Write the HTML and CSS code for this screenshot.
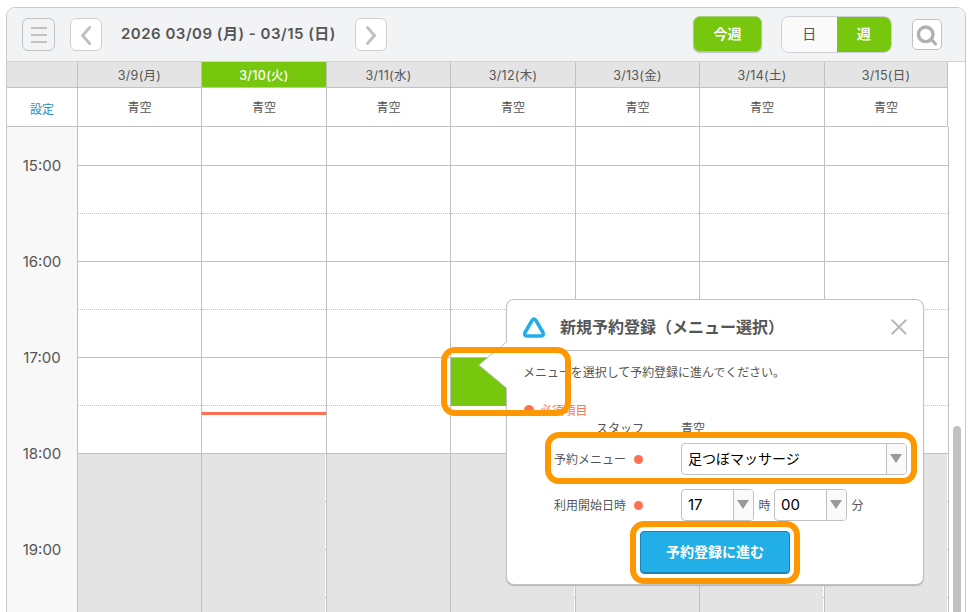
FILE: index.html
```html
<!DOCTYPE html>
<html lang="ja">
<head>
    <meta charset="UTF-8">
    <meta name="viewport" content="width=device-width, initial-scale=1.0">
    <title>予約カレンダー</title>
    <link rel="stylesheet" href="styles.css">
</head>
<body>
    <div class="calendar">
        <div class="toolbar">
            <button class="icon-button menu-button">
                <svg width="31" height="31" viewBox="0 0 31 31"><path d="M8 9h16M8 16h16M8 23h16" stroke="#c1c1c1" stroke-width="2"/></svg>
            </button>
            <button class="icon-button prev-button">
                <svg width="30" height="31" viewBox="0 0 30 31"><path d="M18.6 8.5l-7 8 7 8" fill="none" stroke="#c1c1c1" stroke-width="3" stroke-linecap="round"/></svg>
            </button>
            <h1 class="period">2026 03/09 (月) - 03/15 (日)</h1>
            <button class="icon-button next-button">
                <svg width="30" height="31" viewBox="0 0 30 31"><path d="M11.5 8.5l7 8-7 8" fill="none" stroke="#c1c1c1" stroke-width="3" stroke-linecap="round"/></svg>
            </button>
            <button class="this-week">今週</button>
            <div class="view-switch">
                <button class="view">日</button>
                <button class="view active">週</button>
            </div>
            <button class="icon-button search-button">
                <svg width="28" height="29" viewBox="0 0 28 29"><circle cx="12.7" cy="14.3" r="7.3" fill="none" stroke="#abb1b5" stroke-width="3.4"/><path d="M18.3 19.5l4.2 4.3" stroke="#abb1b5" stroke-width="3.2" stroke-linecap="round"/></svg>
            </button>
        </div>

        <div class="row days">
            <div class="cell"></div>
            <div class="cell">3/9(月)</div>
            <div class="cell today">3/10(火)</div>
            <div class="cell">3/11(水)</div>
            <div class="cell">3/12(木)</div>
            <div class="cell">3/13(金)</div>
            <div class="cell">3/14(土)</div>
            <div class="cell">3/15(日)</div>
        </div>
        <div class="row staff">
            <div class="cell"><a class="setting">設定</a></div>
            <div class="cell">青空</div>
            <div class="cell">青空</div>
            <div class="cell">青空</div>
            <div class="cell">青空</div>
            <div class="cell">青空</div>
            <div class="cell">青空</div>
            <div class="cell">青空</div>
        </div>
        <div class="row schedule">
            <div class="times">
                <div class="time">15:00</div>
                <div class="time">16:00</div>
                <div class="time">17:00</div>
                <div class="time">18:00</div>
                <div class="time">19:00</div>
            </div>
            <div class="day">
                <div class="slot first"></div><div class="slot half"></div><div class="slot"></div><div class="slot half"></div><div class="slot"></div><div class="slot half"></div><div class="slot"></div><div class="slot half"></div><div class="slot"></div><div class="slot half"></div>
                <div class="closed"></div>
            </div>
            <div class="day wide">
                <div class="slot first"></div><div class="slot half"></div><div class="slot"></div><div class="slot half"></div><div class="slot"></div><div class="slot half"></div><div class="slot"></div><div class="slot half"></div><div class="slot"></div><div class="slot half"></div>
                <div class="closed"></div>
                <div class="now"></div>
            </div>
            <div class="day">
                <div class="slot first"></div><div class="slot half"></div><div class="slot"></div><div class="slot half"></div><div class="slot"></div><div class="slot half"></div><div class="slot"></div><div class="slot half"></div><div class="slot"></div><div class="slot half"></div>
                <div class="closed"></div>
            </div>
            <div class="day wide">
                <div class="slot first"></div><div class="slot half"></div><div class="slot"></div><div class="slot half"></div><div class="slot"></div><div class="slot half selected"></div><div class="slot"></div><div class="slot half"></div><div class="slot"></div><div class="slot half"></div>
                <div class="closed"></div>
            </div>
            <div class="day">
                <div class="slot first"></div><div class="slot half"></div><div class="slot"></div><div class="slot half"></div><div class="slot"></div><div class="slot half"></div><div class="slot"></div><div class="slot half"></div><div class="slot"></div><div class="slot half"></div>
                <div class="closed"></div>
            </div>
            <div class="day wide">
                <div class="slot first"></div><div class="slot half"></div><div class="slot"></div><div class="slot half"></div><div class="slot"></div><div class="slot half"></div><div class="slot"></div><div class="slot half"></div><div class="slot"></div><div class="slot half"></div>
                <div class="closed"></div>
            </div>
            <div class="day wide">
                <div class="slot first"></div><div class="slot half"></div><div class="slot"></div><div class="slot half"></div><div class="slot"></div><div class="slot half"></div><div class="slot"></div><div class="slot half"></div><div class="slot"></div><div class="slot half"></div>
                <div class="closed"></div>
            </div>
            <div class="scroll"></div>
        </div>
    </div>

    <div class="popup">
        <svg class="popup-arrow" width="29" height="48" viewBox="0 0 29 48"><path d="M29 .5L28.5 1 .8 24 28.5 47l.5.5z" fill="#fff"/><path d="M28.5 1L.8 24l27.7 23" fill="none" stroke="#c1c1c1"/></svg>
        <div class="popup-header">
            <svg class="logo" width="24" height="22" viewBox="0 0 24 22"><path d="M10.2 3.2Q12 .7 13.8 3.2L21 15.5Q22.2 18.8 19 19H5Q1.8 18.8 3 15.5z" fill="none" stroke="#22aee6" stroke-width="3.6" stroke-linejoin="round"/></svg>
            <h2 class="popup-title">新規予約登録（メニュー選択）</h2>
            <svg class="close" width="16" height="16" viewBox="0 0 16 16"><path d="M.7.7l14.6 14.6M15.3.7L.7 15.3" stroke="#b8b8b8" stroke-width="2"/></svg>
        </div>
        <p class="message">メニューを選択して予約登録に進んでください。</p>
        <p class="required-note"><span class="dot"></span>必須項目</p>
        <div class="field staff-field">
            <div class="label">スタッフ</div>
            <div class="staff-name">青空</div>
        </div>
        <div class="field menu-field">
            <div class="label">予約メニュー<span class="dot"></span></div>
            <div class="select menu-select"><span class="value">足つぼマッサージ</span><span class="caret"></span></div>
        </div>
        <div class="field date-field">
            <div class="label">利用開始日時<span class="dot"></span></div>
            <div class="select"><span class="value">17</span><span class="caret"></span></div>
            <span class="unit">時</span>
            <div class="select"><span class="value">00</span><span class="caret"></span></div>
            <span class="unit">分</span>
        </div>
        <button class="submit">予約登録に進む</button>
    </div>

    <div class="mark mark-slot"></div>
    <div class="mark mark-menu"></div>
    <div class="mark mark-submit"></div>
</body>
</html>
```
FILE: styles.css
```css
* {
    box-sizing: border-box;
}
body {
    position: relative;
    margin: 0;
    padding: 7px 6px 0;
    height: 612px;
    overflow: hidden;
    background: #fff;
    color: #555;
    font-family: "Noto Sans CJK JP", sans-serif;
    font-size: 12px;
}
h1, h2, p {
    margin: 0;
}
button {
    padding: 0;
    font-family: inherit;
    color: inherit;
}
.calendar {
    display: flex;
    flex-direction: column;
    width: 960px;
    height: 605px;
    border: 1px solid #c9c9c9;
    border-bottom: 0;
    border-radius: 9px 9px 0 0;
    overflow: hidden;
}

/* toolbar */
.toolbar {
    display: flex;
    flex: none;
    align-items: flex-start;
    height: 54px;
    padding: 8px 0 0 15px;
    background: #f2f3f5;
    border-bottom: 1px solid #d2d2d2;
}
.icon-button {
    flex: none;
    width: 32px;
    height: 33px;
    margin-top: 2px;
    border: 1px solid #d0d0d0;
    border-radius: 6px;
    background: #fff;
}
.icon-button svg {
    display: block;
}
.menu-button {
    width: 33px;
    border-color: #c1c1c1;
    background: #f2f3f5;
}
.prev-button {
    margin-left: 15px;
}
.period {
    width: 214px;
    margin: 6px 20px 0 19px;
    font-family: Inter, "Noto Sans CJK JP", sans-serif;
    font-size: 15px;
    line-height: 24px;
    font-weight: 600;
    letter-spacing: 0.5px;
    white-space: nowrap;
}
.this-week {
    width: 69px;
    height: 36px;
    margin-left: 306px;
    padding-bottom: 2px;
    border: 1px solid #a9cf7d;
    border-radius: 7px;
    background: #76c70e;
    box-shadow: 0 1px 1px #bfc3c8;
    color: #fff;
    font-size: 14px;
    font-weight: bold;
}
.view-switch {
    display: flex;
    width: 111px;
    height: 37px;
    margin-left: 19px;
    border: 1px solid #cdd0d4;
    border-radius: 8px;
    overflow: hidden;
}
.view {
    flex: 1;
    padding-bottom: 3px;
    border: 0;
    background: #fafafa;
    font-size: 14px;
}
.view.active {
    background: #76c70e;
    color: #fff;
    font-weight: bold;
}
.search-button {
    width: 30px;
    height: 31px;
    margin: 3px 0 0 20px;
    border-color: #c1c1c1;
    border-radius: 5px;
}

/* week table */
.row {
    display: grid;
    grid-template-columns: 71px 124px 125px 124px 125px 124px 125px 123px;
}
.cell {
    display: flex;
    align-items: center;
    justify-content: center;
    border-right: 1px solid #c1c1c1;
    border-bottom: 1px solid #c1c1c1;
}
.days .cell {
    height: 26px;
    background: #e4e4e4;
    font-family: Inter, "Noto Sans CJK JP", sans-serif;
    font-size: 12.5px;
    letter-spacing: 0.3px;
}
.days .today {
    background: #76c70e;
    color: #fff;
    font-weight: 500;
}
.staff .cell {
    height: 39px;
    padding-bottom: 1px;
}
.setting {
    margin-top: 4px;
    color: #1a91c4;
}
.schedule {
    flex: 1;
    min-height: 0;
    grid-template-columns: 71px 124px 125px 124px 125px 124px 125px 124px 1fr;
    grid-template-rows: 100%;
}
.times {
    overflow: hidden;
    background: #f8f8f8;
    border-right: 1px solid #c1c1c1;
}
.time {
    height: 96px;
    line-height: 96px;
    text-align: center;
    font-family: Inter, sans-serif;
    font-size: 15px;
}
.time:first-child {
    margin-top: -9px;
}
.day {
    position: relative;
    overflow: hidden;
    border-right: 1px solid #c1c1c1;
}
.slot {
    height: 48px;
    border-bottom: 1px solid #c1c1c1;
}
.slot.first {
    height: 39px;
}
.slot.half {
    border-bottom-style: dotted;
}
.slot.selected {
    background: #76c70e;
    border-bottom: 1px solid #76c70e;
}
.closed {
    position: absolute;
    top: 327px;
    bottom: 0;
    left: 0;
    right: 0;
    background: #e4e4e4;
}
.wide .closed {
    right: 1px;
}
.now {
    position: absolute;
    top: 285px;
    left: 0;
    right: 0;
    height: 3px;
    background: #ff7052;
}
.scroll {
    width: 8px;
    margin: 299px 0 0 4px;
    border-radius: 4px 4px 0 0;
    background: #c1c1c1;
}

/* booking popup */
.popup {
    position: absolute;
    top: 299px;
    left: 506px;
    width: 418px;
    height: 286px;
    border: 1px solid #c1c1c1;
    border-radius: 8px;
    background: #fff;
    box-shadow: 0 1px 1px #b5b5b5;
}
.popup-arrow {
    position: absolute;
    top: 41px;
    left: -29px;
}
.popup-header {
    display: flex;
    align-items: center;
    height: 51px;
    padding: 3px 16px 0 15px;
    border-bottom: 1px solid #c1c1c1;
}
.logo {
    margin-top: 2px;
}
.popup-title {
    flex: 1;
    margin: -2px 0 0 14px;
    font-size: 16px;
    line-height: 24px;
}
.message {
    padding: 12px 0 0 16px;
    line-height: 18px;
    letter-spacing: -0.05px;
}
.required-note {
    display: flex;
    align-items: center;
    gap: 6px;
    padding: 20px 0 0 17px;
    line-height: 18px;
    letter-spacing: -0.2px;
    color: #ff7052;
}
.dot {
    display: inline-block;
    width: 9px;
    height: 9px;
    border-radius: 50%;
    background: #ff7052;
}
.required-note .dot {
    width: 10px;
    height: 10px;
}
.field {
    display: flex;
    align-items: center;
    padding-left: 47px;
}
.label {
    display: flex;
    align-items: center;
    gap: 8px;
    width: 127px;
    padding-bottom: 2px;
}
.label .dot {
    position: relative;
    top: 1px;
}
.staff-field {
    height: 17px;
}
.staff-field .label {
    padding-left: 42px;
    padding-bottom: 0;
}
.menu-field {
    height: 32px;
    margin-top: 7px;
}
.date-field {
    height: 32px;
    margin-top: 14px;
}
.select {
    display: flex;
    width: 73px;
    height: 32px;
    border: 1px solid #c1c1c1;
    border-radius: 4px;
    overflow: hidden;
}
.menu-select {
    width: 226px;
}
.value {
    flex: 1;
    padding-left: 6px;
    color: #000;
    font-size: 14px;
    line-height: 28px;
}
.date-field .value {
    font-family: Inter, sans-serif;
    font-size: 15px;
    line-height: 30px;
}
.caret {
    display: flex;
    align-items: center;
    justify-content: center;
    width: 20px;
    padding: 0 1px 2px 0;
    border-left: 1px solid #c1c1c1;
    background: #fafafa;
}
.caret::after {
    content: "";
    border: 6px solid transparent;
    border-top: 9px solid #999;
    border-bottom: 0;
}
.unit {
    width: 20px;
    padding: 0 0 1px 1px;
    text-align: center;
}
.submit {
    display: block;
    width: 150px;
    height: 43px;
    margin: 10px 0 0 133px;
    padding-bottom: 3px;
    border: 1px solid #1b84b2;
    border-radius: 4px;
    background: #22aee6;
    box-shadow: inset 0 -1px 0 #1b84b2;
    color: #fff;
    font-size: 14px;
    font-weight: bold;
}

/* highlight frames */
.mark {
    position: absolute;
    border: 6px solid #ff9800;
    border-radius: 14px;
}
.mark-slot {
    top: 347px;
    left: 441px;
    width: 130px;
    height: 69px;
}
.mark-menu {
    top: 432px;
    left: 545px;
    width: 372px;
    height: 52px;
}
.mark-submit {
    top: 521px;
    left: 630px;
    width: 170px;
    height: 63px;
}
```
